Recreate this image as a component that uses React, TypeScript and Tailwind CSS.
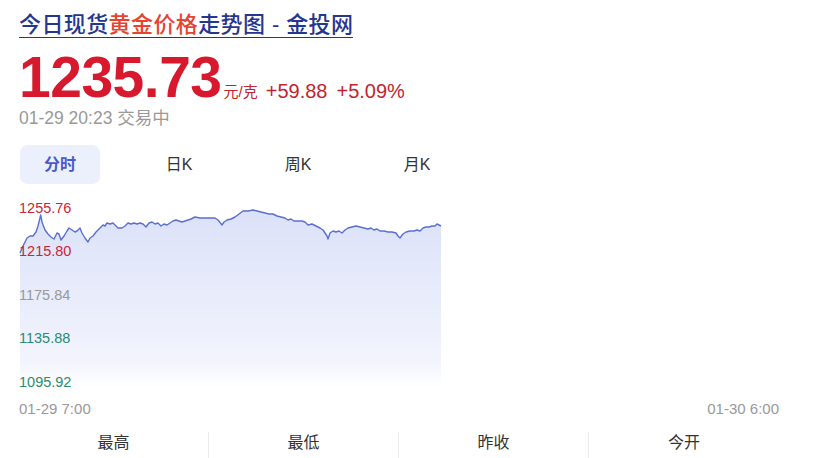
import React from "react";

const pts: [number, number][] = [
  [20, 253], [23, 246], [27, 238], [30, 236], [33, 236], [36, 232], [38, 226], [40.7, 215], [42, 222], [45, 230],
  [48, 234], [51, 237], [54, 239], [57, 233], [59, 234], [61, 240], [64, 236], [67, 231], [69, 228], [72, 230],
  [75, 232], [77, 231], [80, 228], [82, 233], [85, 238], [88, 242], [90, 238], [93, 236], [96, 232], [100, 228],
  [103, 225], [105, 226], [107, 223], [110, 224], [113, 223], [116, 226], [118, 228], [122, 228], [125, 226],
  [128, 223], [131, 224], [134, 223], [137, 224], [140, 223], [143, 224], [146, 227], [149, 223], [152, 222],
  [155, 224], [158, 223], [161, 226], [164, 224], [167, 225], [170, 223], [173, 221], [176, 220], [179, 221],
  [182, 222], [185, 221], [188, 220], [191, 219], [195, 217], [200, 218], [205, 218], [210, 218], [215, 218],
  [218, 220], [222, 225], [224, 222], [227, 220], [231, 219], [235, 217], [239, 214], [243, 211], [248, 211],
  [253, 210], [257, 211], [261, 212], [265, 213], [269, 214], [273, 214], [277, 216], [281, 217], [285, 218],
  [288, 220], [291, 219], [294, 221], [298, 221], [302, 221], [305, 222], [308, 225], [312, 224], [316, 226],
  [320, 228], [323, 230], [325, 233], [327, 236], [328, 239], [330, 233], [333, 231], [336, 232], [339, 231],
  [342, 233], [345, 230], [348, 228], [352, 227], [356, 226], [360, 227], [364, 228], [368, 229], [371, 228],
  [374, 230], [377, 229], [380, 231], [384, 231], [388, 232], [392, 232], [396, 233], [398, 236], [400, 238],
  [403, 234], [406, 232], [410, 231], [414, 231], [417, 230], [420, 231], [423, 228], [426, 227], [429, 227],
  [432, 226], [435, 226], [437, 224], [439, 225], [441, 226],
];

const OX = 19;
const OY = 195;
const linePath = pts.map((p, i) => `${i === 0 ? "M" : "L"}${(p[0] - OX).toFixed(1)} ${(p[1] - OY).toFixed(1)}`).join(" ");
const areaPath = `${linePath} L${(441 - OX).toFixed(1)} 192 L${(20 - OX).toFixed(1)} 192 Z`;

export default function App() {
  return (
    <div
      className="w-[815px] h-[458px] bg-white overflow-hidden pl-[19px]"
      style={{ fontFamily: '"Liberation Sans", Arial, "Noto Sans CJK SC", sans-serif' }}
    >
      <div className="w-[760px]">
        <div className="pt-[13px]">
          <a className="text-[22px] leading-[24px] font-medium tracking-[0.4px] text-[#25368f] border-b-[1.5px] border-[#25368f] inline-block">
            今日现货<span className="text-[#e8432e]">黄金价格</span>走势图 - 金投网
          </a>
        </div>
        <div className="flex items-end mt-[14px] h-[48px]">
          <span className="text-[57px] leading-[48px] font-bold text-[#d8182c] tracking-[-0.5px]">1235.73</span>
          <span className="text-[15px] leading-[18px] text-[#c4232f] ml-[2px] mb-[0px]">元/克</span>
          <span className="text-[20px] leading-[20px] text-[#c4232f] ml-[8px]">+59.88</span>
          <span className="text-[20px] leading-[20px] text-[#c4232f] ml-[9px]">+5.09%</span>
        </div>
        <div className="text-[17.5px] leading-[20px] text-[#999999] mt-[7px]">01-29 20:23 交易中</div>
        <div className="flex gap-[39px] mt-[17px] pl-[1px]">
          <div className="w-[80px] h-[39px] rounded-[8px] bg-[#eceffc] flex items-center justify-center text-[16px] font-bold text-[#4a5ac8]">
            分时
          </div>
          <div className="w-[80px] h-[39px] flex items-center justify-center text-[16px] text-[#333333]">日K</div>
          <div className="w-[80px] h-[39px] flex items-center justify-center text-[16px] text-[#333333]">周K</div>
          <div className="w-[80px] h-[39px] flex items-center justify-center text-[16px] text-[#333333]">月K</div>
        </div>
        <div className="relative h-[200px] mt-[11px]">
          <svg width="760" height="200" viewBox="0 0 760 200" className="absolute left-0 top-0">
            <defs>
              <linearGradient id="g" x1="0" y1="0" x2="0" y2="1">
                <stop offset="0%" stopColor="#dbe1f8" />
                <stop offset="85%" stopColor="#f2f4fd" />
                <stop offset="100%" stopColor="#ffffff" />
              </linearGradient>
            </defs>
            <path d={areaPath} fill="url(#g)" stroke="none" />
            <path d={linePath} fill="none" stroke="#5a6fd6" strokeWidth="1.4" strokeLinejoin="round" />
          </svg>
          <div className="absolute left-0 top-0 text-[14.5px] leading-[16px]">
            <div className="absolute top-[5px] left-0 text-[#c8263a]">1255.76</div>
            <div className="absolute top-[48px] left-0 text-[#c8263a]">1215.80</div>
            <div className="absolute top-[92px] left-0 text-[#999999]">1175.84</div>
            <div className="absolute top-[135px] left-0 text-[#2a8c6c]">1135.88</div>
            <div className="absolute top-[179px] left-0 text-[#2a8c6c]">1095.92</div>
          </div>
        </div>
        <div className="flex justify-between text-[15px] leading-[16px] text-[#999999] mt-[6px]">
          <span>01-29 7:00</span>
          <span>01-30 6:00</span>
        </div>
        <div className="grid grid-cols-4 mt-[15px] text-[16px] leading-[22px] text-[#333333]">
          <div className="flex justify-center h-[30px] border-r border-[#ebebeb]">最高</div>
          <div className="flex justify-center h-[30px] border-r border-[#ebebeb]">最低</div>
          <div className="flex justify-center h-[30px] border-r border-[#ebebeb]">昨收</div>
          <div className="flex justify-center h-[30px]">今开</div>
        </div>
      </div>
    </div>
  );
}
